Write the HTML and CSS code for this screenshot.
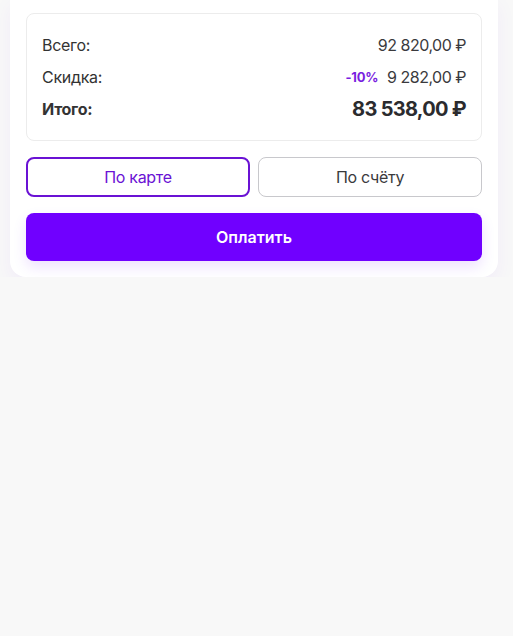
FILE: index.html
```html
<!DOCTYPE html>
<html lang="ru">
<head>
<meta charset="utf-8">
<link rel="stylesheet" href="styles.css">
</head>
<body>
<div class="page">
  <div class="card">
    <div class="summary">
      <div class="row">
        <span class="label">Всего:</span>
        <span class="value">92 820,00 ₽</span>
      </div>
      <div class="row">
        <span class="label">Скидка:</span>
        <span class="value"><span class="discount">-10%</span>9 282,00 ₽</span>
      </div>
      <div class="row total">
        <span class="label">Итого:</span>
        <span class="value">83 538,00 ₽</span>
      </div>
    </div>
    <div class="methods">
      <button class="method active">По карте</button>
      <button class="method">По счёту</button>
    </div>
    <button class="pay">Оплатить</button>
  </div>
</div>
</body>
</html>
```
FILE: styles.css
```css
html, body {
  margin: 0;
  padding: 0;
  background: #f8f8f8;
  font-family: Inter, "Noto Sans", sans-serif;
  color: #2b2b2e;
}
.page {
  padding: 0 15px 0 10px;
}
.card {
  margin-top: -3px;
  background: #fff;
  border-radius: 0 0 16px 16px;
  padding: 16px;
  box-shadow: 0 8px 20px rgba(112, 0, 255, 0.05);
}
.summary {
  border: 1px solid #ececec;
  border-radius: 8px;
  padding: 19px 15px 19px;
  display: flex;
  flex-direction: column;
  gap: 8px;
}
.row {
  display: flex;
  justify-content: space-between;
  align-items: center;
  height: 24px;
  font-size: 16px;
  letter-spacing: -0.3px;
}
.label { color: #333; }
.value { color: #3a3a3d; display: flex; align-items: center; letter-spacing: -0.5px; }
.discount {
  color: #7a1ee0;
  font-size: 13px;
  font-weight: 700;
  margin-right: 9px;
  letter-spacing: -0.3px;
}
.total .label { font-weight: 700; font-size: 16px; }
.total .value { font-weight: 700; font-size: 20px; color: #2b2b2e; letter-spacing: -0.7px; }
.methods {
  margin-top: 16px;
  display: grid;
  grid-template-columns: 1fr 1fr;
  gap: 8px;
}
.method {
  height: 40px;
  border: 1px solid #c8c8cc;
  border-radius: 8px;
  background: #fff;
  font-family: inherit;
  font-size: 16px;
  color: #3a3a3d;
  letter-spacing: -0.3px;
}
.method.active {
  border: 2px solid #6a12d4;
  color: #6a12d4;
}
.pay {
  margin-top: 16px;
  width: 100%;
  height: 48px;
  border: 0;
  border-radius: 8px;
  background: #7000ff;
  color: #fff;
  font-family: inherit;
  font-size: 16px;
  font-weight: 600;
  box-shadow: 0 6px 14px rgba(112, 0, 255, 0.12);
}
```
